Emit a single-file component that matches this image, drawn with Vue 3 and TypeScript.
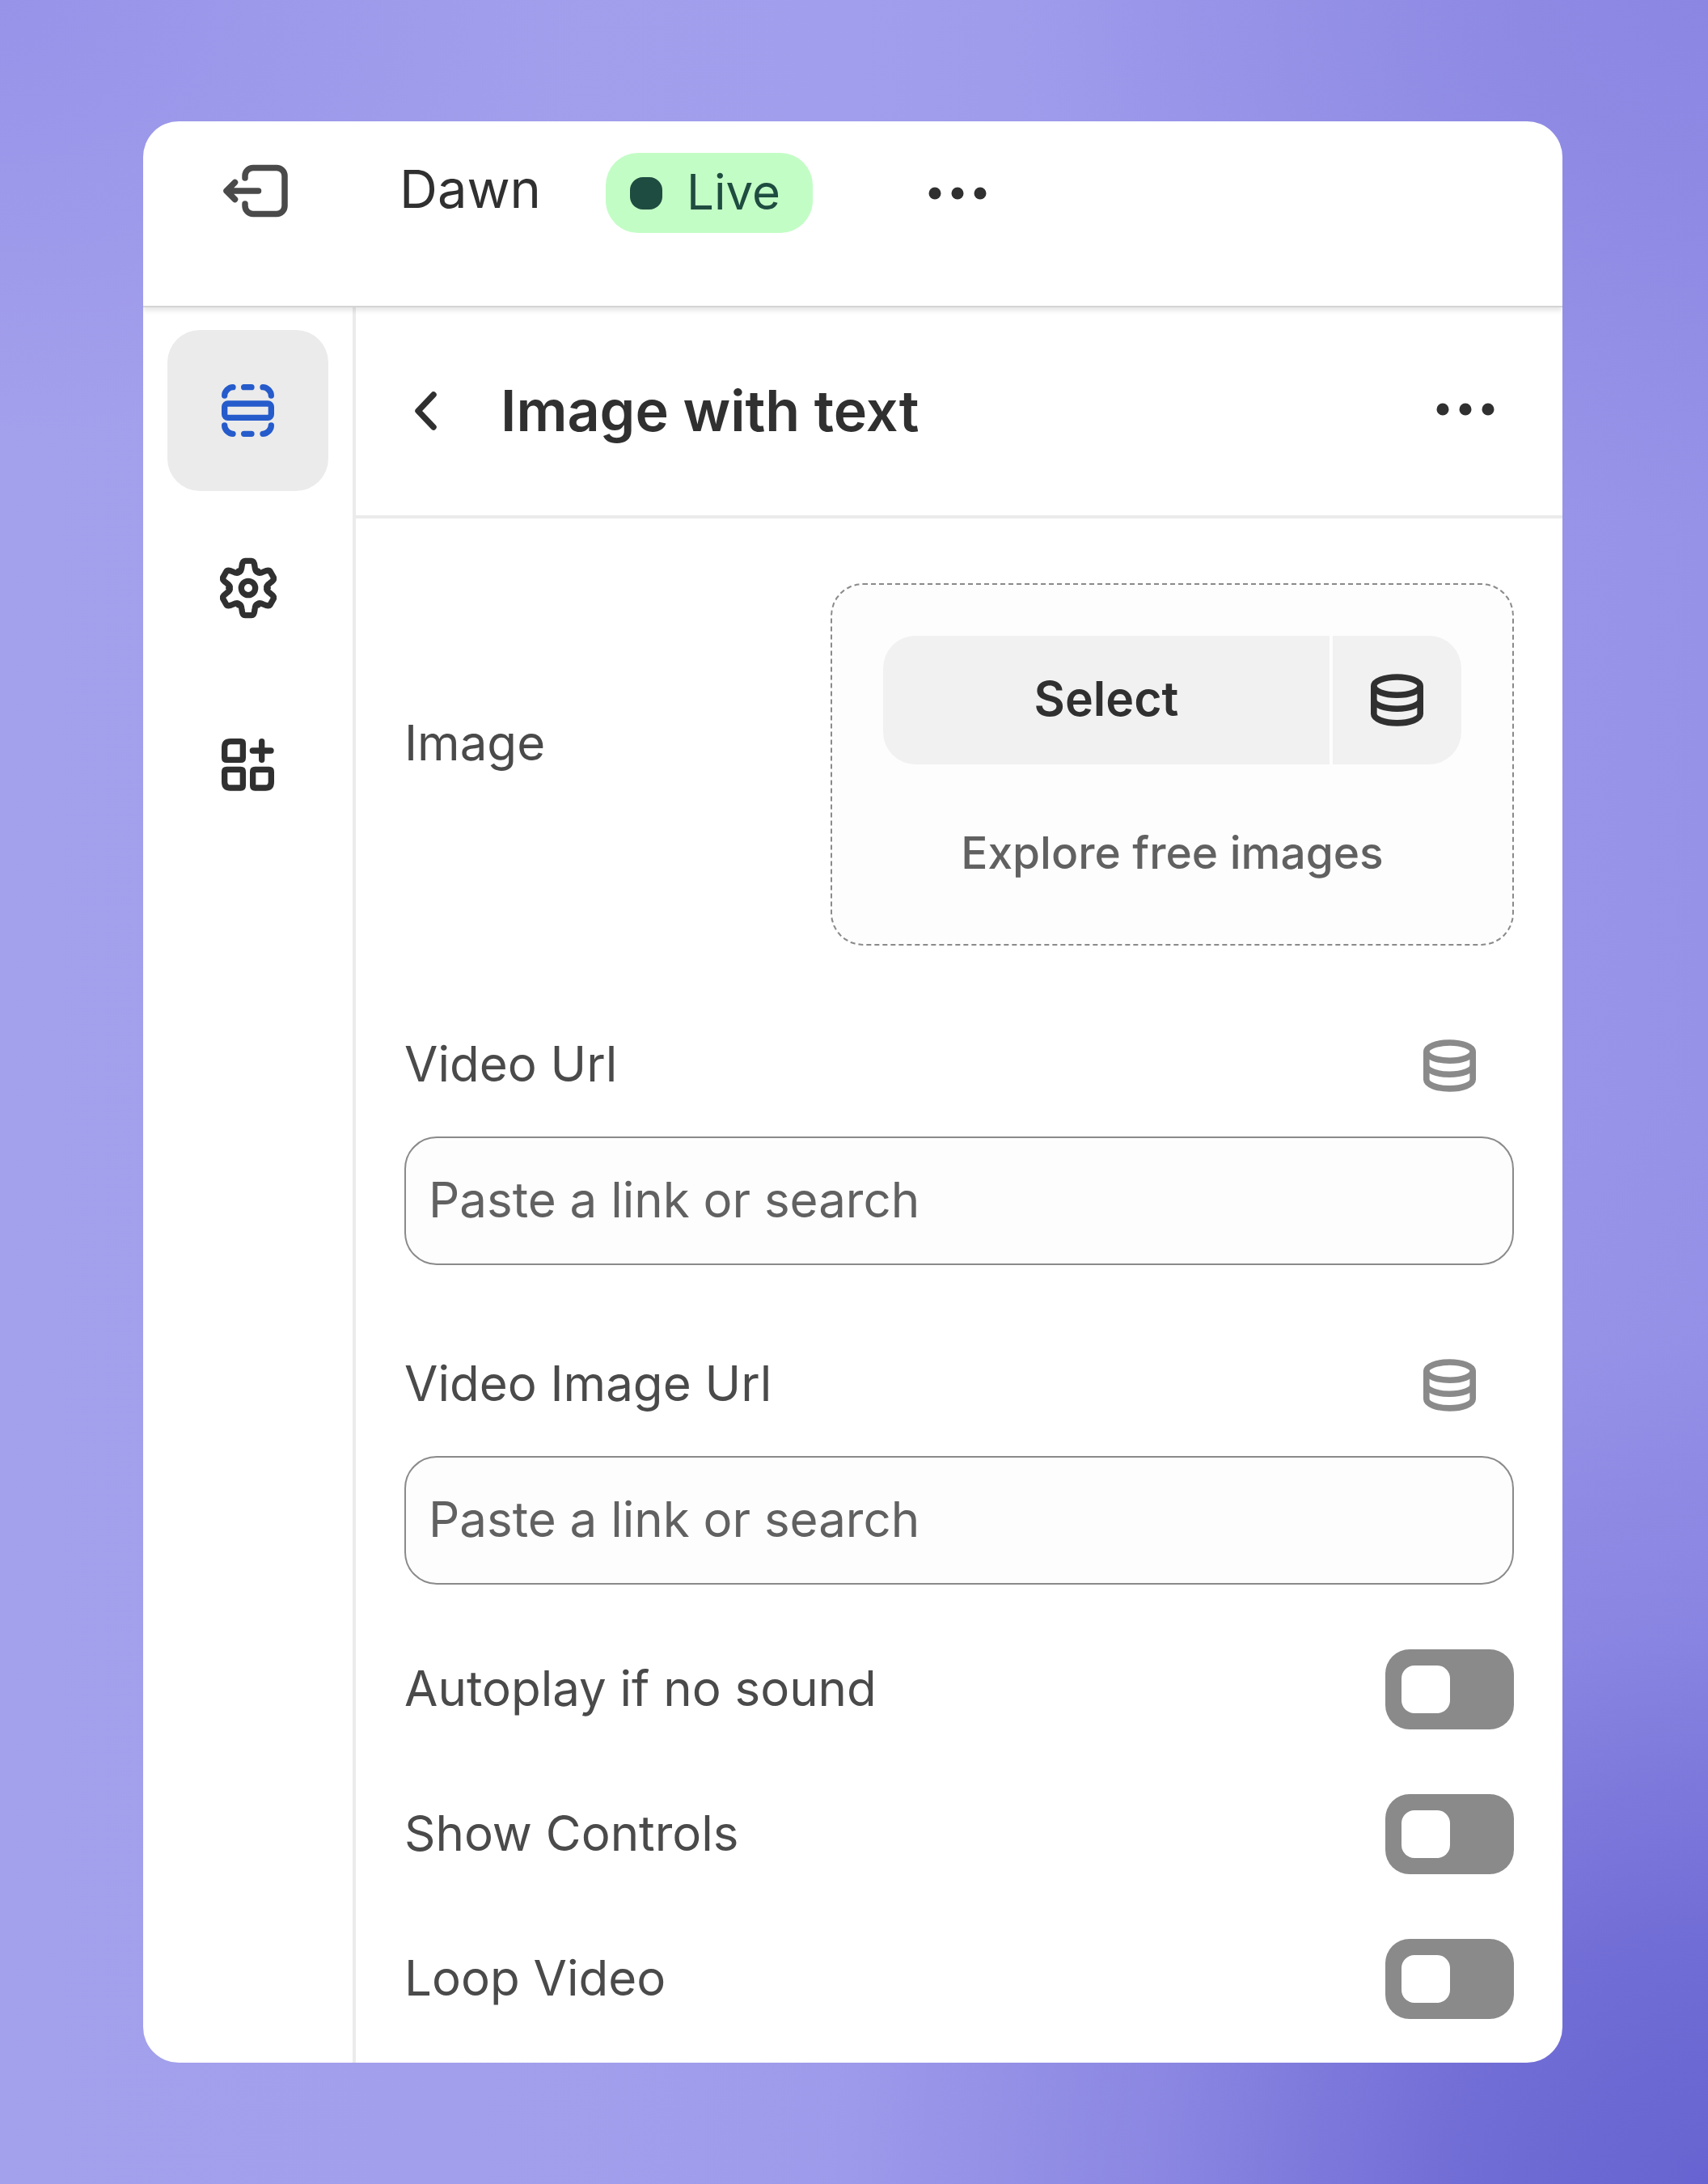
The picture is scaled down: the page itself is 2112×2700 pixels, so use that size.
<script setup lang="ts">
import { reactive } from 'vue'

interface UrlField {
  id: string
  label: string
  value: string
}

interface Toggle {
  id: string
  label: string
  on: boolean
}

const urlFields = reactive<UrlField[]>([
  { id: 'video-url', label: 'Video Url', value: '' },
  { id: 'video-image-url', label: 'Video Image Url', value: '' },
])

const toggles = reactive<Toggle[]>([
  { id: 'autoplay', label: 'Autoplay if no sound', on: false },
  { id: 'controls', label: 'Show Controls', on: false },
  { id: 'loop', label: 'Loop Video', on: false },
])

const toothAngles: number[] = [0, 60, 120, 180, 240, 300]
</script>

<template>
  <div class="page">
    <svg class="sprite" aria-hidden="true">
      <symbol id="icon-database" viewBox="0 0 196 195">
        <g fill="none" stroke="currentColor" stroke-width="23">
          <ellipse cx="98" cy="45" rx="86.500" ry="33.500" />
          <path d="M11.500 45V149C11.500 168 50 183 98 183S184.500 168 184.500 149V45" />
          <path d="M11.500 97C11.500 115 50 130 98 130S184.500 115 184.500 97" />
        </g>
      </symbol>
      <symbol id="icon-dots" viewBox="0 0 72 16">
        <g fill="currentColor">
          <circle cx="8" cy="8" r="7.500" />
          <circle cx="36" cy="8" r="7.500" />
          <circle cx="64" cy="8" r="7.500" />
        </g>
      </symbol>
    </svg>

    <main class="card">
      <header class="topbar">
        <div class="theme">
          <button type="button" class="icon-button exit" aria-label="Exit">
            <svg width="80" height="66" viewBox="0 0 80 66" fill="none" stroke="currentColor" stroke-width="7.500" stroke-linecap="round" stroke-linejoin="round">
              <path d="M27 17V14.500A10 10 0 0 1 37 4.500H66A10 10 0 0 1 76 14.500V51.500A10 10 0 0 1 66 61.500H37A10 10 0 0 1 27 51.500V49" />
              <path d="M43.500 33H4M14.500 22.500L4 33L14.500 43.500" />
            </svg>
          </button>
          <span class="theme-name">Dawn</span>
        </div>
        <span class="badge"><span class="badge-dot"></span>Live</span>
        <button type="button" class="icon-button" aria-label="More theme actions">
          <svg width="72" height="16"><use href="#icon-dots" /></svg>
        </button>
      </header>

      <div class="columns">
        <nav class="rail" aria-label="Editor">
          <button type="button" class="rail-item active" aria-label="Sections">
            <svg width="65" height="65" viewBox="0 0 195 195" fill="none" stroke="currentColor" stroke-width="22" stroke-linecap="round">
              <rect x="11" y="72" width="173" height="52" rx="12" />
              <path d="M11 42C11 26 26 11 42 11M83 11H111M153 11C169 11 184 26 184 42M11 153C11 169 26 184 42 184M83 184H111M153 184C169 184 184 169 184 153" />
            </svg>
          </button>
          <button type="button" class="rail-item" aria-label="Theme settings">
            <svg width="70" height="76" viewBox="-105 -114 210 228" fill="none" stroke="currentColor" stroke-width="22" stroke-linecap="round">
              <path
                v-for="angle in toothAngles"
                :key="angle"
                :transform="`rotate(${angle})`"
                d="M-36 -62C-29 -58 -25 -66 -24 -80Q-22 -101 -12 -101H12Q22 -101 24 -80C25 -66 29 -58 36 -62"
              />
              <circle r="26" />
            </svg>
          </button>
          <button type="button" class="rail-item" aria-label="App embeds">
            <svg width="65" height="65" viewBox="0 0 195 195" fill="none" stroke="currentColor" stroke-width="22" stroke-linecap="round">
              <path d="M33 11H71Q79 11 79 19V71Q79 79 71 79H19Q11 79 11 71V33Q11 11 33 11Z" />
              <path d="M19 115H71Q79 115 79 123V175Q79 183 71 183H33Q11 183 11 161V123Q11 115 19 115Z" />
              <path d="M124 115H176Q184 115 184 123V161Q184 183 162 183H124Q116 183 116 175V123Q116 115 124 115Z" />
              <path d="M149 11V79M115 45H183" />
            </svg>
          </button>
        </nav>

        <section class="panel">
          <div class="panel-head">
            <button type="button" class="icon-button" aria-label="Back">
              <svg width="28" height="48" viewBox="0 0 28 48" fill="none" stroke="currentColor" stroke-width="7.500" stroke-linecap="round" stroke-linejoin="round">
                <path d="M23 4L4 24L23 44" />
              </svg>
            </button>
            <h1 class="panel-title">Image with text</h1>
            <button type="button" class="icon-button panel-more" aria-label="More section actions">
              <svg width="72" height="16"><use href="#icon-dots" /></svg>
            </button>
          </div>

          <form class="settings" @submit.prevent>
            <div class="image-row">
              <label class="label image-label" for="image-select">Image</label>
              <div class="dropzone">
                <div class="split">
                  <button id="image-select" type="button" class="split-main">Select</button>
                  <button type="button" class="split-side" aria-label="Connect image source">
                    <svg width="65" height="65"><use href="#icon-database" /></svg>
                  </button>
                </div>
                <a class="explore" href="#">Explore free images</a>
              </div>
            </div>

            <div v-for="field in urlFields" :key="field.id" class="field">
              <div class="field-head">
                <label class="label" :for="field.id">{{ field.label }}</label>
                <button type="button" class="icon-button source" :aria-label="`Connect source for ${field.label}`">
                  <svg width="65" height="65"><use href="#icon-database" /></svg>
                </button>
              </div>
              <input :id="field.id" v-model="field.value" class="input" type="text" placeholder="Paste a link or search" />
            </div>

            <div class="toggles">
              <div v-for="toggle in toggles" :key="toggle.id" class="toggle-row">
                <label class="label" :for="toggle.id">{{ toggle.label }}</label>
                <input :id="toggle.id" v-model="toggle.on" class="switch" type="checkbox" role="switch" />
              </div>
            </div>
          </form>
        </section>
      </div>
    </main>
  </div>
</template>

<style>
body {
  margin: 0;
}
</style>

<style scoped>
.page {
  box-sizing: border-box;
  min-height: 100vh;
  padding: 150px 180px 150px 177px;
  font-family: Inter, "Liberation Sans", sans-serif;
  font-optical-sizing: none;
  font-size: 60px;
  line-height: 80px;
  color: #303030;
  background:
    radial-gradient(ellipse 66% 50% at 100% 100%, #6763d0 0%, rgba(109, 105, 212, 0.88) 24%, rgba(122, 118, 218, 0.5) 50%, rgba(140, 136, 227, 0.15) 78%, rgba(150, 146, 232, 0) 100%),
    radial-gradient(ellipse 40% 24% at 100% 0%, #8a86e2 0%, rgba(150, 146, 232, 0) 100%),
    radial-gradient(ellipse 34% 20% at 0% 0%, #9793e9 0%, rgba(160, 157, 236, 0) 100%),
    linear-gradient(90deg, #a3a0ec 0%, #a19eed 50%, #9692e8 100%);
}

.sprite {
  display: none;
}

button {
  font: inherit;
  color: inherit;
  border: 0;
  padding: 0;
  cursor: pointer;
}

svg {
  display: block;
}

.icon-button {
  background: none;
}

.card {
  overflow: hidden;
  border-radius: 44px;
  background: #fff;
}

.topbar {
  display: flex;
  align-items: center;
  padding: 39px 84px 90px 99px;
  border-bottom: 2px solid #d4d4d4;
  box-shadow: 0 4px 6px rgba(0, 0, 0, 0.1);
  position: relative;
}

.theme {
  display: flex;
  align-items: center;
  gap: 138px;
  margin: 0 80px 6px 0;
}

.exit {
  color: #4a4a4a;
}

.theme-name {
  padding-bottom: 4px;
  font-size: 65px;
}

.badge {
  display: flex;
  align-items: center;
  box-sizing: border-box;
  height: 99px;
  margin-right: 143px;
  padding: 0 40px 4px 30px;
  gap: 30px;
  border-radius: 40px;
  background: #c3fdc6;
  color: #1f4c40;
}

.badge-dot {
  width: 40px;
  height: 40px;
  margin-top: 4px;
  border-radius: 16px;
  background: currentColor;
}

.columns {
  display: flex;
}

.rail {
  display: flex;
  flex-direction: column;
  gap: 20px;
  padding: 28px 30px;
  border-right: 4px solid #ebebeb;
}

.rail-item {
  display: flex;
  align-items: center;
  justify-content: center;
  width: 199px;
  height: 199px;
  border-radius: 40px;
  background: none;
}

.rail-item.active {
  background: #ebebeb;
  color: #255bcb;
}

.panel {
  flex: 1;
  min-width: 0;
}

.panel-head {
  display: flex;
  align-items: center;
  padding: 88px 84px 89px 73px;
  border-bottom: 4px solid #ebebeb;
}

.panel-title {
  flex: 1;
  margin: 0 0 0 78px;
  font-size: 70px;
  font-weight: 600;
}

.panel-more {
  padding-bottom: 4px;
}

.settings {
  padding: 80px 60px 54px;
}

.label {
  padding-bottom: 4px;
  color: #4a4a4a;
  line-height: 76px;
}

.image-row {
  display: flex;
  align-items: center;
  justify-content: space-between;
}

.image-label {
  padding-bottom: 54px;
}

.dropzone {
  box-sizing: border-box;
  width: 845px;
  padding: 63px 63px 73px;
  border: 2px dashed #8a8a8a;
  border-radius: 40px;
  background: #fdfdfd;
  text-align: center;
}

.split {
  display: flex;
  gap: 4px;
  height: 159px;
  margin-bottom: 69px;
}

.split-main,
.split-side {
  background: #f1f1f1;
}

.split-main {
  flex: 1;
  padding-bottom: 4px;
  border-radius: 40px 0 0 40px;
  font-size: 59px;
  font-weight: 600;
}

.split-side {
  display: flex;
  align-items: center;
  justify-content: center;
  width: 159px;
  border-radius: 0 40px 40px 0;
}

.explore {
  display: block;
  color: #616161;
  font-size: 55px;
  font-weight: 500;
  text-decoration: none;
}

.field {
  padding-top: 108px;
}

.field-head {
  display: flex;
  align-items: center;
  justify-content: space-between;
  margin-bottom: 48px;
}

.source {
  display: flex;
  justify-content: center;
  width: 159px;
  color: #8a8a8a;
}

.input {
  display: block;
  box-sizing: border-box;
  width: 100%;
  height: 159px;
  padding: 0 28px 4px;
  border: 2px solid #8a8a8a;
  border-radius: 40px;
  background: #fdfdfd;
  color: #303030;
  font: inherit;
}

.input::placeholder {
  color: #616161;
  opacity: 1;
}

.toggles {
  display: grid;
  gap: 80px;
  padding-top: 80px;
}

.toggle-row {
  display: flex;
  align-items: center;
  justify-content: space-between;
}

.switch {
  appearance: none;
  box-sizing: border-box;
  width: 159px;
  height: 99px;
  margin: 0;
  padding: 20px;
  border-radius: 30px;
  background: #8a8a8a;
  cursor: pointer;
}

.switch::before {
  content: "";
  display: block;
  width: 60px;
  height: 59px;
  border-radius: 16px;
  background: #fff;
}

.switch:checked {
  background: #303030;
}

.switch:checked::before {
  margin-left: auto;
}
</style>
